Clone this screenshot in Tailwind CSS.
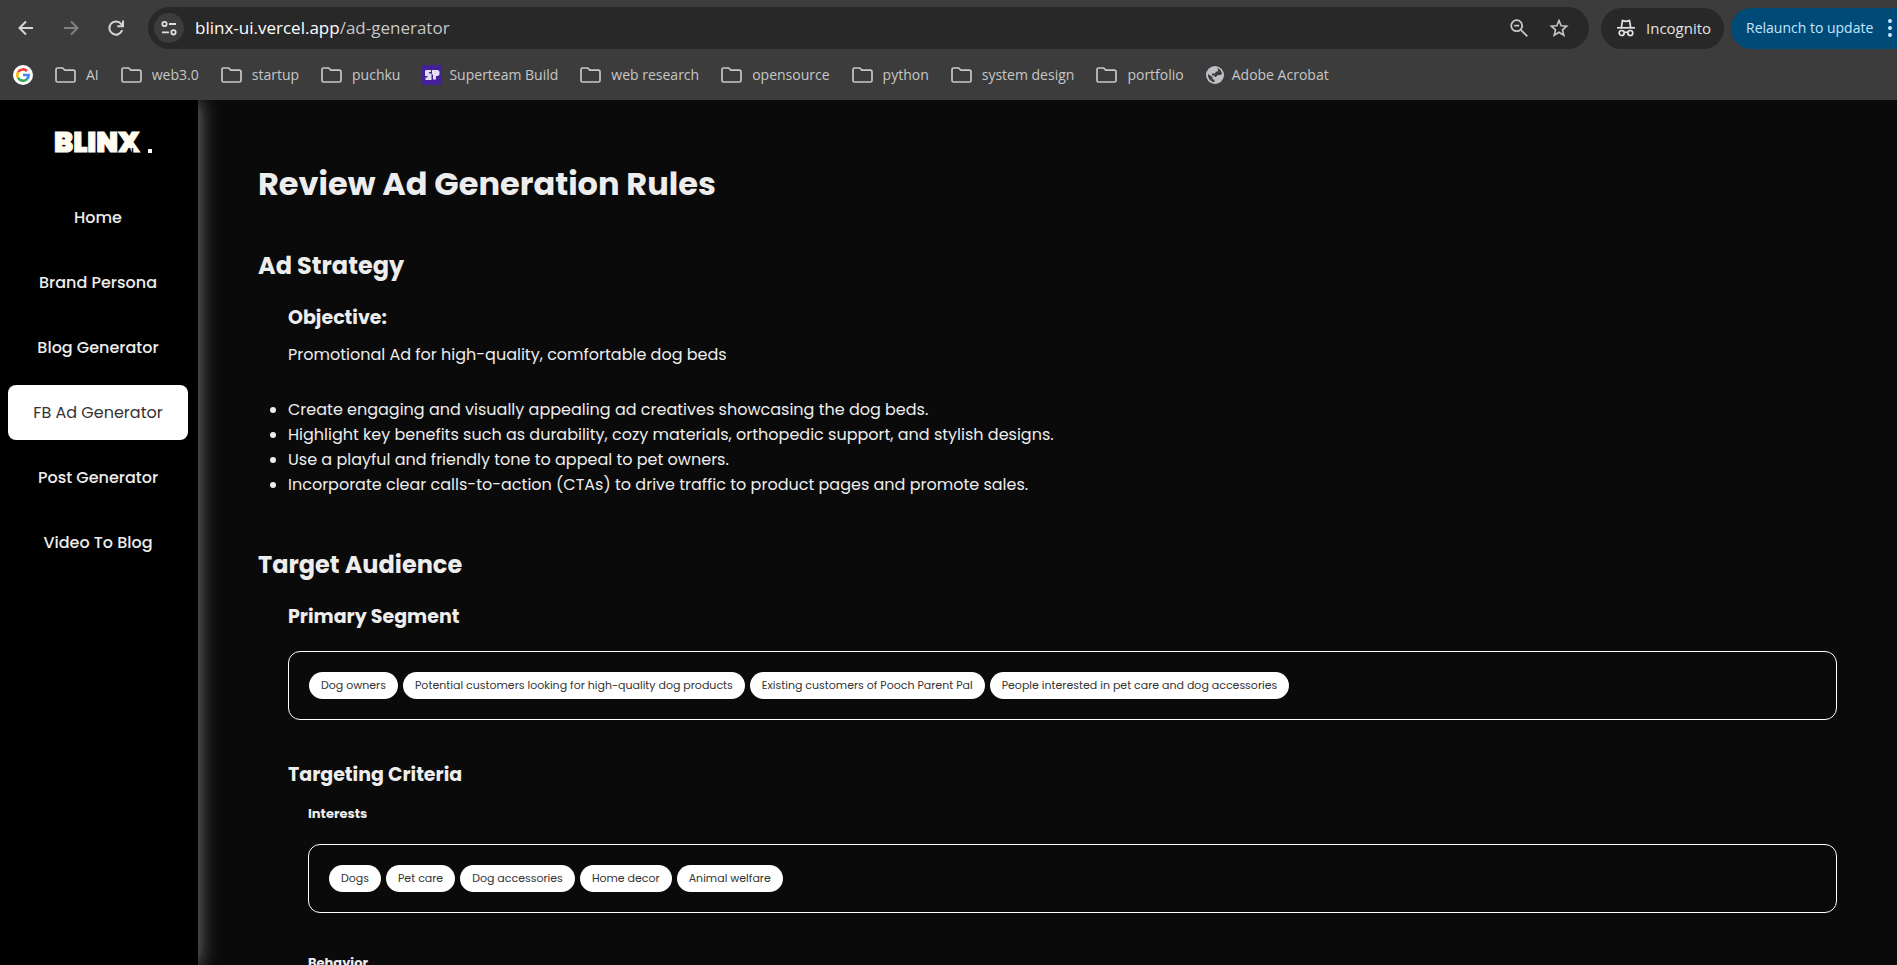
<!DOCTYPE html>
<html lang="en">
<head>
<meta charset="utf-8">
<meta name="viewport" content="width=device-width, initial-scale=1">
<title>Blinx – Ad Generator</title>
<script src="https://cdn.jsdelivr.net/npm/@tailwindcss/browser@4"></script>
</head>
<body class="flex h-screen flex-col overflow-hidden bg-[#0a0a0a] font-['Poppins','Inter',sans-serif] text-[#ededed]">
<svg class="hidden" aria-hidden="true">
  <symbol id="folder" viewBox="0 0 21 16"><path d="M2.5 1h5.2l2.1 2.2h8.7a1.500 1.500 0 0 1 1.500 1.500v8.800a1.500 1.500 0 0 1-1.500 1.500h-16A1.500 1.500 0 0 1 1 13.500v-11A1.500 1.500 0 0 1 2.500 1z" fill="none" stroke="#c7c7c7" stroke-width="1.700"/></symbol>
</svg>

<header class="relative z-20 h-[100px] shrink-0 overflow-hidden bg-[#3c3c3c] font-['Segoe_UI','Open_Sans',sans-serif]">
  <div class="flex items-center pt-[7px]">
    <div class="flex w-[148px] shrink-0 items-center gap-[25px] pl-4">
      <button aria-label="Back"><svg class="size-5" viewBox="0 0 20 20" fill="none" stroke="#d5d5d5" stroke-width="2"><path d="M17 10H3.500M10 3.500 3.500 10l6.500 6.500"/></svg></button>
      <button aria-label="Forward"><svg class="size-5" viewBox="0 0 20 20" fill="none" stroke="#808080" stroke-width="2"><path d="M3 10h13.500M10 3.500l6.500 6.500-6.500 6.500"/></svg></button>
      <button aria-label="Reload"><svg class="size-5" viewBox="0 0 20 20" fill="none" stroke="#d5d5d5" stroke-width="2"><path d="M16.200 12.200A6.600 6.600 0 1 1 15.200 6L16.800 7.800"/><path d="M17 2.500v5.700h-5.700"/></svg></button>
    </div>
    <div class="flex h-[42px] min-w-0 flex-1 items-center rounded-full bg-[#282828] pr-5 pl-[6px]">
      <button aria-label="Site information" class="flex size-[30px] items-center justify-center rounded-full bg-[#3c3c3c]"><svg class="size-[18px]" viewBox="0 0 18 18" fill="none" stroke="#dedede" stroke-width="1.800"><circle cx="4.500" cy="5" r="2.200"/><path d="M9 5h7M2 13.300h7"/><circle cx="13.500" cy="13.300" r="2.200"/></svg></button>
      <div class="ml-[11px] flex-1 text-[17px] text-[#c7c7c7]"><span class="text-white">blinx-ui.vercel.app</span>/ad-generator</div>
      <button aria-label="Zoom" class="mr-5"><svg class="size-5" viewBox="0 0 20 20" fill="none" stroke="#c7c7c7" stroke-width="1.800"><circle cx="7.700" cy="7.700" r="5.500"/><path d="M11.800 11.800 18.300 18.300M5.200 7.700h5"/></svg></button>
      <button aria-label="Bookmark this tab"><svg class="size-5" viewBox="0 0 20 20" fill="none" stroke="#c7c7c7" stroke-width="1.600"><path d="m10 2.600 2.200 5.100 5.500.5-4.200 3.600 1.300 5.400-4.800-2.900-4.800 2.900 1.300-5.400L2.300 8.200l5.500-.5z"/></svg></button>
    </div>
    <div class="ml-3 flex h-[41px] w-[123px] shrink-0 items-center gap-[11px] rounded-full bg-[#282828] pl-4 text-[15px] text-[#e3e3e3]">
      <svg class="size-[18px] shrink-0" viewBox="0 0 18 18" fill="none" stroke="#e3e3e3" stroke-width="1.700"><path d="M0 8.800h18"/><path d="M4.300 8.800 5.500 1.600 9 2.400l3.500-.8 1.200 7.200"/><circle cx="4.700" cy="14" r="2.500"/><circle cx="13.300" cy="14" r="2.500"/><path d="M7.200 13.500q1.800-.9 3.600 0"/></svg>
      Incognito
    </div>
    <button class="ml-[7px] flex h-[41px] w-[166px] shrink-0 items-center gap-[15px] rounded-l-full bg-[#004a77] pl-[15px] text-sm whitespace-nowrap text-[#c2e7ff]">
      Relaunch to update
      <svg class="h-5 w-1 shrink-0" viewBox="0 0 4 20" fill="#c2e7ff"><circle cx="2" cy="3" r="2"/><circle cx="2" cy="10" r="2"/><circle cx="2" cy="17" r="2"/></svg>
    </button>
  </div>
  <nav class="mt-[13px] flex h-[26px] items-center gap-[22px] pl-[13px] text-sm whitespace-nowrap text-[#c7c7c7]" aria-label="Bookmarks">
    <a href="#" aria-label="Google"><svg class="size-5" viewBox="0 0 20 20" fill="none" stroke-width="2.600"><circle cx="10" cy="10" r="10" fill="#fff"/><path d="M5.100 7.200A5.700 5.700 0 0 1 14 6" stroke="#ea4335"/><path d="M5.100 12.800a5.700 5.700 0 0 1 0-5.600" stroke="#fbbc05"/><path d="M14 14.100a5.700 5.700 0 0 1-8.900-1.300" stroke="#34a853"/><path d="M10 10h5.700a5.700 5.700 0 0 1-1.900 4.200" stroke="#4285f4"/></svg></a>
    <a href="#" class="flex items-center gap-[10px]"><svg class="h-4 w-[21px]"><use href="#folder"/></svg>AI</a>
    <a href="#" class="flex items-center gap-[10px]"><svg class="h-4 w-[21px]"><use href="#folder"/></svg>web3.0</a>
    <a href="#" class="flex items-center gap-[10px]"><svg class="h-4 w-[21px]"><use href="#folder"/></svg>startup</a>
    <a href="#" class="flex items-center gap-[10px]"><svg class="h-4 w-[21px]"><use href="#folder"/></svg>puchku</a>
    <a href="#" class="flex items-center gap-[7px]"><svg class="size-5" viewBox="0 0 20 20"><rect width="20" height="20" rx="2" fill="#41209a"/><path d="M4 5h5v2H7v1.500h2.500V15H3.500v-2.500h2V11H3V6zM10 5h6l1.500 1.500v3L16 11h-2v3.500h-3V9.500h-1z" fill="#e4dff0"/></svg>Superteam Build</a>
    <a href="#" class="flex items-center gap-[10px]"><svg class="h-4 w-[21px]"><use href="#folder"/></svg>web research</a>
    <a href="#" class="flex items-center gap-[10px]"><svg class="h-4 w-[21px]"><use href="#folder"/></svg>opensource</a>
    <a href="#" class="flex items-center gap-[10px]"><svg class="h-4 w-[21px]"><use href="#folder"/></svg>python</a>
    <a href="#" class="flex items-center gap-[10px]"><svg class="h-4 w-[21px]"><use href="#folder"/></svg>system design</a>
    <a href="#" class="flex items-center gap-[10px]"><svg class="h-4 w-[21px]"><use href="#folder"/></svg>portfolio</a>
    <a href="#" class="flex items-center gap-2"><svg class="size-[18px]" viewBox="0 0 18 18"><circle cx="9" cy="9" r="9" fill="#bdc1c6"/><path d="M2 8l4.500 3v2l2 1v2.200A7.200 7.200 0 0 1 2 8zM11 2.100a7.200 7.200 0 0 1 5 5.600L14.500 9h-2.700L10 11H8.500V9.500H6V7.500h3l1-2h2V3.500z" fill="#3c3c3c"/></svg>Adobe Acrobat</a>
  </nav>
</header>

<div class="flex min-h-0 flex-1">
  <aside class="z-10 w-[198px] shrink-0 bg-black pr-[10px] pl-2 shadow-[0_0_20px_rgba(255,255,255,0.5)]">
    <a href="#" aria-label="Blinx AI" class="mt-7 ml-[46px] flex w-[98px] items-end justify-between text-[28px] leading-[30px] font-black text-[#fffcf2]">
      <span class="relative [-webkit-text-stroke:1px_#fffcf2]">BLINX<span class="absolute right-[6px] bottom-[4px] text-[6px] leading-[6px] text-black [-webkit-text-stroke:0px]">AI</span></span>
      <span class="mb-[5px] size-1 bg-[#fffcf2]"></span>
    </a>
    <nav class="mt-8 flex flex-col gap-[10px] text-center text-base font-medium">
      <a href="#" class="rounded-lg leading-[55px]">Home</a>
      <a href="#" class="rounded-lg leading-[55px]">Brand Persona</a>
      <a href="#" class="rounded-lg leading-[55px]">Blog Generator</a>
      <a href="#" aria-current="page" class="rounded-lg bg-white leading-[55px] font-normal text-[#333]">FB Ad Generator</a>
      <a href="#" class="rounded-lg leading-[55px]">Post Generator</a>
      <a href="#" class="rounded-lg leading-[55px]">Video To Blog</a>
    </nav>
  </aside>

  <main class="min-w-0 flex-1 overflow-hidden px-[60px] pt-[60px]">
    <h1 class="text-[32px] leading-[48px] font-bold">Review Ad Generation Rules</h1>
    <section class="mt-10">
      <h2 class="text-2xl leading-9 font-bold">Ad Strategy</h2>
      <div class="mt-5 pl-[30px]">
        <h3 class="text-[19px] leading-7 font-bold">Objective:</h3>
        <p class="mt-[10px] text-base leading-[25px]">Promotional Ad for high-quality, comfortable dog beds</p>
        <ul class="mt-[30px] list-disc text-base leading-[25px]">
          <li>Create engaging and visually appealing ad creatives showcasing the dog beds.</li>
          <li>Highlight key benefits such as durability, cozy materials, orthopedic support, and stylish designs.</li>
          <li>Use a playful and friendly tone to appeal to pet owners.</li>
          <li>Incorporate clear calls-to-action (CTAs) to drive traffic to product pages and promote sales.</li>
        </ul>
      </div>
    </section>
    <section class="mt-[50px]">
      <h2 class="text-2xl leading-9 font-bold">Target Audience</h2>
      <div class="mt-5 pl-[30px]">
        <h3 class="text-[19px] leading-7 font-bold">Primary Segment</h3>
        <ul class="mt-5 flex flex-wrap gap-[5px] rounded-xl border border-white p-5 text-[11px] leading-[27px] text-[#333]">
          <li class="rounded-full bg-white px-3">Dog owners</li>
          <li class="rounded-full bg-white px-3">Potential customers looking for high-quality dog products</li>
          <li class="rounded-full bg-white px-3">Existing customers of Pooch Parent Pal</li>
          <li class="rounded-full bg-white px-3">People interested in pet care and dog accessories</li>
        </ul>
        <h3 class="mt-[41px] text-[19px] leading-7 font-bold">Targeting Criteria</h3>
        <div class="mt-[15px] pl-5">
          <h4 class="text-[13px] leading-5 font-bold">Interests</h4>
          <ul class="mt-5 flex flex-wrap gap-[5px] rounded-xl border border-white p-5 text-[11px] leading-[27px] text-[#333]">
            <li class="rounded-full bg-white px-3">Dogs</li>
            <li class="rounded-full bg-white px-3">Pet care</li>
            <li class="rounded-full bg-white px-3">Dog accessories</li>
            <li class="rounded-full bg-white px-3">Home decor</li>
            <li class="rounded-full bg-white px-3">Animal welfare</li>
          </ul>
          <h4 class="mt-10 text-[13px] leading-5 font-bold">Behavior</h4>
        </div>
      </div>
    </section>
  </main>
</div>
</body>
</html>
